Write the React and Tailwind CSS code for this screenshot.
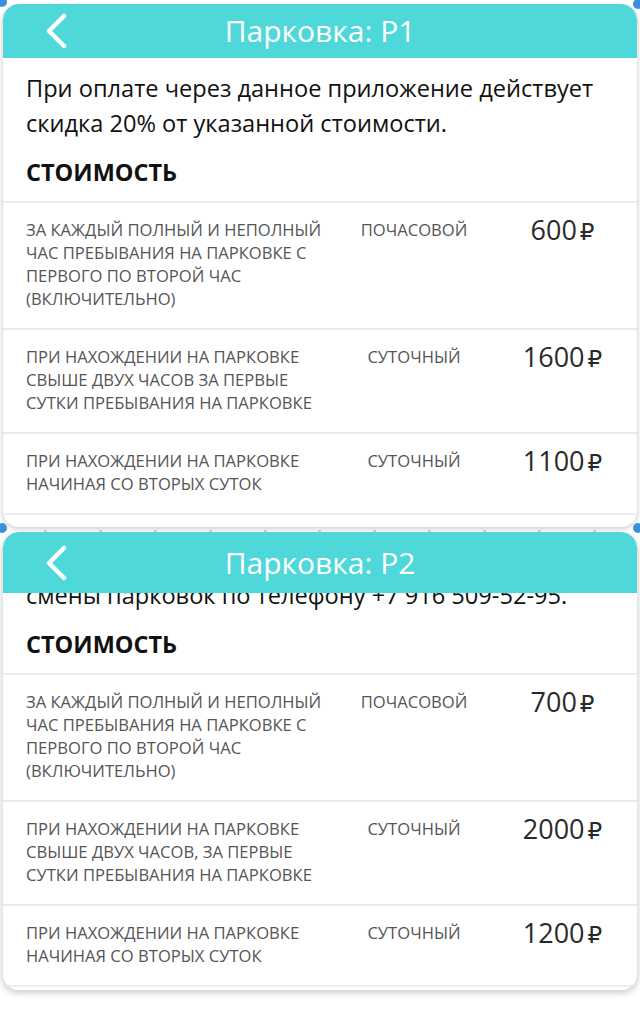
import React from 'react';

const TEAL = 'bg-[#4fd8d9]';

const tariffsP1 = [
    {
        lines: ['ЗА КАЖДЫЙ ПОЛНЫЙ И НЕПОЛНЫЙ', 'ЧАС ПРЕБЫВАНИЯ НА ПАРКОВКЕ С', 'ПЕРВОГО ПО ВТОРОЙ ЧАС', '(ВКЛЮЧИТЕЛЬНО)'],
        kind: 'ПОЧАСОВОЙ',
        price: '600',
    },
    {
        lines: ['ПРИ НАХОЖДЕНИИ НА ПАРКОВКЕ', 'СВЫШЕ ДВУХ ЧАСОВ ЗА ПЕРВЫЕ', 'СУТКИ ПРЕБЫВАНИЯ НА ПАРКОВКЕ'],
        kind: 'СУТОЧНЫЙ',
        price: '1600',
    },
    {
        lines: ['ПРИ НАХОЖДЕНИИ НА ПАРКОВКЕ', 'НАЧИНАЯ СО ВТОРЫХ СУТОК'],
        kind: 'СУТОЧНЫЙ',
        price: '1100',
    },
];

const tariffsP2 = [
    {
        lines: ['ЗА КАЖДЫЙ ПОЛНЫЙ И НЕПОЛНЫЙ', 'ЧАС ПРЕБЫВАНИЯ НА ПАРКОВКЕ С', 'ПЕРВОГО ПО ВТОРОЙ ЧАС', '(ВКЛЮЧИТЕЛЬНО)'],
        kind: 'ПОЧАСОВОЙ',
        price: '700',
    },
    {
        lines: ['ПРИ НАХОЖДЕНИИ НА ПАРКОВКЕ', 'СВЫШЕ ДВУХ ЧАСОВ, ЗА ПЕРВЫЕ', 'СУТКИ ПРЕБЫВАНИЯ НА ПАРКОВКЕ'],
        kind: 'СУТОЧНЫЙ',
        price: '2000',
    },
    {
        lines: ['ПРИ НАХОЖДЕНИИ НА ПАРКОВКЕ', 'НАЧИНАЯ СО ВТОРЫХ СУТОК'],
        kind: 'СУТОЧНЫЙ',
        price: '1200',
    },
];

function Header({ title, height }) {
    return (
        <div className={`${TEAL} ${height} flex items-center relative rounded-t-[16px]`}>
            <svg className="absolute left-[40px] top-1/2 -translate-y-1/2" width="28" height="36" viewBox="0 0 28 36" fill="none">
                <path d="M21 3 L6 18 L21 33" stroke="white" strokeWidth="4.5" strokeLinecap="round" strokeLinejoin="round" />
            </svg>
            <h1 className="w-full text-center text-white text-[30px] font-medium leading-none">{title}</h1>
        </div>
    );
}

function TariffRow({ row }) {
    return (
        <div className="grid grid-cols-[314px_148px_1fr] pl-[23px] pt-[15px] pb-[18px] border-b-2 border-[#ececec]">
            <div className="text-[16.6px] leading-[23px] text-[#555] whitespace-nowrap">
                {row.lines.map((l) => (
                    <div key={l}>{l}</div>
                ))}
            </div>
            <div className="text-center text-[16.6px] leading-[23px] text-[#555]">{row.kind}</div>
            <div className="text-center text-[27px] leading-[23px] text-[#2a2a2a]">
                {row.price}
                <span className="text-[23px] ml-[3px]">₽</span>
            </div>
        </div>
    );
}

function CostTable({ rows }) {
    return (
        <>
            <h2 className="px-[23px] mt-[16px] pb-[14px] text-[23.5px] leading-[30px] font-bold text-[#111] border-b-2 border-[#ececec]">
                СТОИМОСТЬ
            </h2>
            {rows.map((r) => (
                <TariffRow key={r.price} row={r} />
            ))}
        </>
    );
}

function Handle({ className }) {
    return <span className={`absolute w-[10px] h-[10px] rounded-full bg-[#3a8fdf] ${className}`} />;
}

export default function App() {
    return (
        <div className="w-[640px] h-[1019px] bg-white overflow-hidden relative" style={{ fontFamily: '"Open Sans", "DejaVu Sans", sans-serif' }}>
            <div className="px-[2px] pt-[4px]">
                <div className="rounded-[16px] bg-white shadow-[0_2px_4px_rgba(0,0,0,0.18)] border-x border-[#e4e4e4] h-[523px] overflow-hidden">
                    <Header title="Парковка: P1" height="h-[54px]" />
                    <p className="px-[23px] pt-[13px] text-[23.6px] leading-[35px] text-[#111]">
                        При оплате через данное приложение действует
                        <br />
                        скидка 20% от указанной стоимости.
                    </p>
                    <CostTable rows={tariffsP1} />
                </div>
            </div>

            {/* thin strip of the list behind the cards */}
            <div className="h-[5px] flex justify-between px-[44px] items-end">
                {Array.from({ length: 11 }).map((_, i) => (
                    <span key={i} className="w-[3px] h-[2px] bg-[#c8c8c8]" />
                ))}
            </div>

            <div className="px-[2px]">
                <div className="rounded-[16px] bg-white shadow-[0_3px_6px_rgba(0,0,0,0.2)] border-x border-[#e4e4e4] overflow-hidden pb-[3px]">
                    <Header title="Парковка: P2" height="h-[61px]" />
                    {/* scrolled text, upper half hidden under the header */}
                    <div className="h-[20px] overflow-hidden">
                        <p className="px-[23px] text-[23.6px] leading-[4px] text-[#111] whitespace-nowrap">
                            смены парковок по телефону +7 916 509-52-95.
                        </p>
                    </div>
                    <CostTable rows={tariffsP2} />
                </div>
            </div>

            <Handle className="left-[-3px] top-[-3px]" />
            <Handle className="right-[-3px] top-[-1px]" />
            <Handle className="left-[-3px] top-[523px]" />
            <Handle className="right-[-3px] top-[523px]" />
        </div>
    );
}
